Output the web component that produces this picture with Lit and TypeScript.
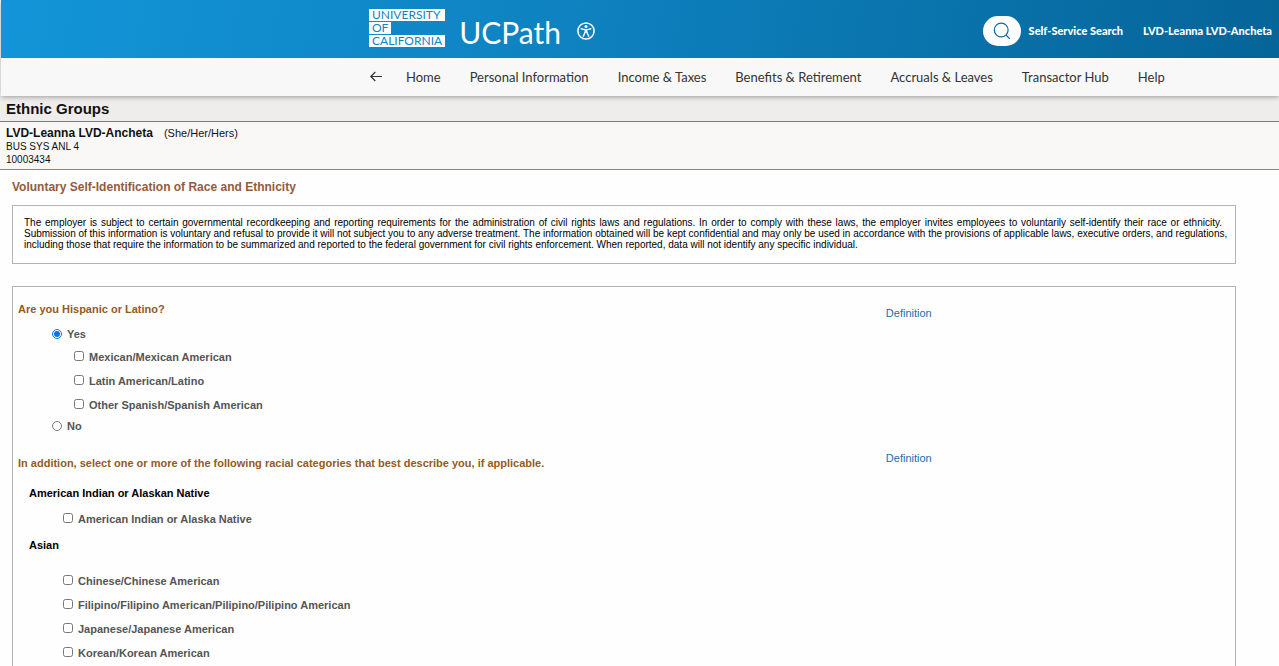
import { LitElement, html, css } from "lit";
import { customElement, property, state } from "lit/decorators.js";

const NAV = [
  "Home",
  "Personal Information",
  "Income & Taxes",
  "Benefits & Retirement",
  "Accruals & Leaves",
  "Transactor Hub",
  "Help",
];

const HISPANIC = ["Mexican/Mexican American", "Latin American/Latino", "Other Spanish/Spanish American"];

const ASIAN = [
  "Chinese/Chinese American",
  "Filipino/Filipino American/Pilipino/Pilipino American",
  "Japanese/Japanese American",
  "Korean/Korean American",
];

@customElement("portal-header")
class PortalHeader extends LitElement {
  static styles = css`
    :host {
      display: block;
      position: relative;
      font-family: Lato, "Noto Sans", sans-serif;
      box-shadow: 0 1px 5px rgba(0, 0, 0, 0.35);
    }
    a {
      color: inherit;
      text-decoration: none;
    }
    button {
      border: 0;
      padding: 0;
      background: none;
      color: inherit;
      display: flex;
      align-items: center;
      justify-content: center;
    }
    .banner {
      display: flex;
      align-items: center;
      height: 58px;
      padding: 0 7px 0 368px;
      color: #fff;
      background: linear-gradient(100deg, #1295d8 0%, #0f84c3 40%, #0972aa 75%, #056498 100%);
    }
    .logo {
      display: flex;
      flex-direction: column;
      align-items: flex-start;
      gap: 1px;
      margin-bottom: 2px;
      color: #0f84c3;
      font-size: 12px;
      line-height: 12px;
    }
    .logo span {
      background: #fff;
      padding: 0 3px;
    }
    .logo .wide {
      align-self: stretch;
    }
    .brand {
      margin: 6px 16px 0 14px;
      font-size: 30px;
      line-height: 40px;
    }
    .tools {
      display: flex;
      align-items: center;
      gap: 20px;
      margin: 4px 0 0 auto;
      font-size: 11px;
      line-height: 16px;
      font-weight: 900;
      white-space: nowrap;
    }
    .find {
      display: flex;
      align-items: center;
      gap: 8px;
    }
    .pill {
      width: 38px;
      height: 30px;
      border-radius: 15px;
      background: #fff;
      color: #0b6a9f;
    }
    .access {
      margin-top: 4px;
    }
    nav {
      display: flex;
      align-items: center;
      gap: 29px;
      height: 38px;
      padding-left: 368px;
      background: #f8f8f8;
      color: #333;
      font-size: 13px;
      line-height: 20px;
      white-space: nowrap;
    }
    .back {
      margin-right: -6px;
    }
  `;
  render() {
    return html`
      <header class="banner">
        <a class="logo" href="#" aria-label="University of California">
          <span class="wide">UNIVERSITY</span><span>OF</span><span class="wide">CALIFORNIA</span>
        </a>
        <a class="brand" href="#">UCPath</a>
        <button class="access" aria-label="Accessibility">
          <svg width="18" height="18" viewBox="0 0 18 18" fill="none" stroke="currentColor">
            <circle cx="9" cy="9" r="8.1" stroke-width="1.5" />
            <circle cx="9" cy="4.4" r="1.5" fill="currentColor" stroke="none" />
            <path d="M4.2 6.8 7.6 7.6h2.8l3.4-.8" stroke-width="1.4" stroke-linecap="round" />
            <path d="M7.6 7.4h2.8v3.2H7.6z" fill="currentColor" stroke="none" />
            <path d="M8.1 10.2 6.3 14.2M9.9 10.2l1.8 4" stroke-width="1.4" stroke-linecap="round" />
          </svg>
        </button>
        <div class="tools">
          <div class="find">
            <button class="pill" aria-label="Search">
              <svg width="18" height="18" viewBox="0 0 18 18" fill="none" stroke="currentColor" stroke-width="1.2">
                <circle cx="8.2" cy="8" r="6.9" />
                <path d="m13 13 3.8 3.8" />
              </svg>
            </button>
            <a href="#">Self-Service Search</a>
          </div>
          <a href="#">LVD-Leanna LVD-Ancheta</a>
        </div>
      </header>
      <nav aria-label="Main">
        <button class="back" aria-label="Back">
          <svg width="14" height="12" viewBox="0 0 14 12" fill="none" stroke="currentColor" stroke-width="1.2">
            <path d="M13 5.5H1.8M6.3 1 1.8 5.5 6.3 10" />
          </svg>
        </button>
        ${NAV.map((t) => html`<a href="#">${t}</a>`)}
      </nav>
    `;
  }
}

@customElement("choice-list")
class ChoiceList extends LitElement {
  @property({ attribute: false }) items: string[] = [];
  static styles = css`
    :host {
      display: block;
    }
    ul {
      list-style: none;
      margin: 0;
      padding: 0;
    }
    label {
      display: flex;
      align-items: center;
      gap: 5px;
      height: 24px;
      line-height: 16px;
    }
    input {
      width: 10px;
      height: 10px;
      margin: 0 0 2px;
    }
  `;
  render() {
    return html`<ul>
      ${this.items.map((t) => html`<li><label><input type="checkbox" />${t}</label></li>`)}
    </ul>`;
  }
}

@customElement("app-root")
class AppRoot extends LitElement {
  @state() private hispanic = "yes";

  static styles = css`
    :host {
      display: block;
      height: 100vh;
      overflow: hidden;
      background: #fefefe;
      color: #000;
      font-family: "Liberation Sans", Arial, sans-serif;
      font-size: 11px;
      line-height: 16px;
    }
    h1,
    h2,
    h3,
    h4,
    p {
      margin: 0;
      font-size: inherit;
    }
    portal-header {
      margin-left: 1px;
    }
    .title {
      padding: 3px 6px 2px;
      background: #efedeb;
      border-bottom: 1px solid #7c7b79;
      font-size: 15px;
      line-height: 20px;
      color: #111;
    }
    .person {
      padding: 4px 6px 3px;
      background: #f9f8f6;
      border-bottom: 1px solid #8c8278;
      font-size: 10px;
      line-height: 13px;
      color: #111;
    }
    .name {
      display: flex;
      gap: 11px;
      font-size: 11px;
      line-height: 14px;
    }
    .name h2 {
      font-size: 12px;
    }
    .page {
      padding: 9px 43px 0 12px;
    }
    .heading {
      font-size: 12px;
      color: #935b3d;
    }
    .notice {
      margin-top: 10px;
      padding: 11px 13px 13px 11px;
      border: 1px solid #b5b3af;
      font-size: 10px;
      line-height: 11px;
      text-align: justify;
    }
    @media (min-width: 1270px) {
      .line {
        display: block;
        white-space: nowrap;
        text-align-last: justify;
      }
    }
    .form {
      margin-top: 22px;
      padding: 14px 0 40px;
      border: 1px solid #b5b3af;
    }
    .section {
      display: grid;
      grid-template-columns: 5fr 2fr;
    }
    .question {
      padding-left: 5px;
      color: #945b22;
    }
    .definition {
      color: #1a6fae;
      text-decoration: none;
      justify-self: start;
    }
    .lower {
      padding-top: 4px;
    }
    .raised {
      margin: -5px 0 5px;
    }
    .answers {
      font-weight: 700;
      color: #555;
      padding: 5px 0 21px 39px;
    }
    .radio {
      display: flex;
      align-items: center;
      gap: 5px;
    }
    .radio input {
      width: 10px;
      height: 10px;
      margin: 0;
      accent-color: #0f73e8;
    }
    .sub {
      padding: 3px 0 1px 22px;
    }
    .group {
      padding: 14px 0 0 16px;
    }
    .race {
      padding: 6px 0 0 50px;
      font-weight: 700;
      color: #555;
    }
    .next {
      padding-top: 6px;
    }
    .spaced {
      padding-top: 16px;
    }
  `;

  render() {
    return html`
      <portal-header></portal-header>
      <main>
        <h1 class="title">Ethnic Groups</h1>
        <div class="person">
          <div class="name"><h2>LVD-Leanna LVD-Ancheta</h2><span>(She/Her/Hers)</span></div>
          <p>BUS SYS ANL 4</p>
          <p>10003434</p>
        </div>
        <div class="page">
          <h2 class="heading">Voluntary Self-Identification of Race and Ethnicity</h2>
          <p class="notice">
            <span class="line">
              The employer is subject to certain governmental recordkeeping and reporting requirements for the
              administration of civil rights laws and regulations. In order to comply with these laws, the employer
              invites employees to voluntarily self-identify their race or ethnicity.
            </span>
            <span class="line">
              Submission of this information is voluntary and refusal to provide it will not subject you to any adverse
              treatment. The information obtained will be kept confidential and may only be used in accordance with the
              provisions of applicable laws, executive orders, and regulations,
            </span>
            including those that require the information to be summarized and reported to the federal government for
            civil rights enforcement. When reported, data will not identify any specific individual.
          </p>
          <form class="form">
            <div class="section">
              <h3 class="question">Are you Hispanic or Latino?</h3>
              <a class="definition lower" href="#">Definition</a>
            </div>
            <div class="answers">
              ${this.radio("yes", "Yes")}
              <choice-list class="sub" .items=${HISPANIC}></choice-list>
              ${this.radio("no", "No")}
            </div>
            <div class="section">
              <h3 class="question">
                In addition, select one or more of the following racial categories that best describe you, if
                applicable.
              </h3>
              <a class="definition raised" href="#">Definition</a>
            </div>
            <h4 class="group">American Indian or Alaskan Native</h4>
            <choice-list class="race" .items=${["American Indian or Alaska Native"]}></choice-list>
            <h4 class="group next">Asian</h4>
            <choice-list class="race spaced" .items=${ASIAN}></choice-list>
          </form>
        </div>
      </main>
    `;
  }

  private radio(value: string, label: string) {
    return html`<label class="radio"
      ><input
        type="radio"
        name="hispanic"
        value=${value}
        .checked=${this.hispanic === value}
        @change=${() => (this.hispanic = value)}
      />${label}</label
    >`;
  }
}
